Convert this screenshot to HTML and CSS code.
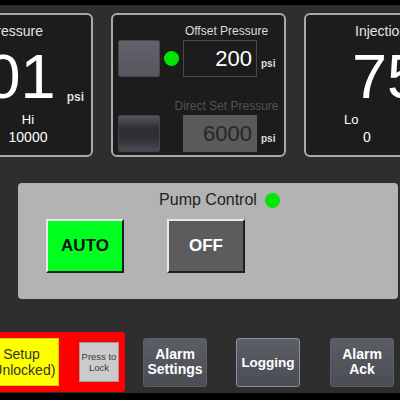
FILE: index.html
```html
<!DOCTYPE html>
<html>
<head>
  <meta charset="utf-8" />
  <title>pump panel</title>
  <meta name="viewport" content="width=device-width, initial-scale=1">
  <link rel="stylesheet" href="styles.css">
</head>
<body>
  <div class="screen">
    <div class="topbar"></div>

    <div class="gauges">
      <section class="gauge gauge-left">
        <div class="gauge-title">Tubing Pressure</div>
        <div class="gauge-value"><span class="reading">3501</span><span class="unit">psi</span></div>
        <div class="limits">
          <div class="limit"><div class="limit-name">Lo</div><div class="limit-num">0</div></div>
          <div class="limit"><div class="limit-name">Hi</div><div class="limit-num">10000</div></div>
        </div>
      </section>

      <section class="setpoints">
        <div class="sp-label">Offset Pressure</div>
        <div class="sp-btn"></div>
        <div class="sp-dot"></div>
        <div class="sp-field">200</div>
        <div class="sp-unit">psi</div>
        <div class="sp-label dim">Direct Set Pressure</div>
        <div class="sp-btn dark"></div>
        <div class="sp-field locked">6000</div>
        <div class="sp-unit">psi</div>
      </section>

      <section class="gauge gauge-right">
        <div class="gauge-title">Injection Pressure</div>
        <div class="gauge-value"><span class="reading">750</span><span class="unit">psi</span></div>
        <div class="limits">
          <div class="limit"><div class="limit-name">Lo</div><div class="limit-num">0</div></div>
          <div class="limit"><div class="limit-name">Hi</div><div class="limit-num">10000</div></div>
        </div>
      </section>
    </div>

    <div class="pump">
      <div class="pump-title">Pump Control <span class="pump-dot"></span></div>
      <div class="pump-buttons">
        <div class="mode-btn on">AUTO</div>
        <div class="mode-btn off">OFF</div>
      </div>
    </div>

    <div class="actions">
      <div class="lock-box">
        <div class="setup">Setup<br>(Unlocked)</div>
        <div class="lock-btn">Press to<br>Lock</div>
      </div>
      <div class="nav">
        <div class="nav-btn">Alarm<br>Settings</div>
        <div class="nav-btn active">Logging</div>
        <div class="nav-btn">Alarm<br>Ack</div>
      </div>
    </div>

    <div class="bottombar"></div>
  </div>
</body>
</html>
```

FILE: styles.css
```css
html, body {
  margin: 0px;
  padding: 0px;
}
body {
  width: 400px;
  height: 400px;
  overflow: hidden;
  background: #2e2e2e;
  font-family: "Liberation Sans", Arial, sans-serif;
}
.screen {
  display: flex;
  flex-direction: column;
  height: 400px;
}
.topbar {
  flex: none;
  height: 5px;
  background: #000;
}
.bottombar {
  flex: none;
  height: 7px;
  margin-top: 1px;
  background: #000;
}

/* gauge row */
.gauges {
  flex: none;
  display: flex;
  gap: 18px;
  height: 144px;
  margin: 8px 0 0 -82px;
}
.gauge, .setpoints {
  flex: none;
  width: 175px;
  height: 144px;
  box-sizing: border-box;
  border: 2px solid #a9a9a9;
  border-radius: 6px;
  background: #1c1c1c;
}
.gauge {
  padding-top: 8px;
  color: #fff;
}
.gauge-title {
  font-size: 14px;
  line-height: 17px;
  color: #e4e4e4;
}
.gauge-value {
  display: flex;
  height: 72px;
}
.reading {
  font-size: 63px;
  line-height: 72px;
}
.unit {
  align-self: flex-end;
  margin: 0 0 8px 11px;
  font-size: 12px;
  font-weight: bold;
  line-height: 14px;
  color: #ddd;
}
.limits {
  display: flex;
}
.limit-name {
  font-size: 13px;
  line-height: 16px;
}
.limit-num {
  font-size: 14px;
  line-height: 19px;
}

.gauge-left .gauge-title {
  text-align: right;
  padding-right: 48px;
}
.gauge-left .gauge-value {
  justify-content: flex-end;
  padding-right: 7px;
}
.gauge-left .limits {
  justify-content: flex-end;
  padding-right: 33px;
}
.gauge-left .limit {
  width: 60px;
  text-align: center;
}

.gauge-right .gauge-title {
  padding-left: 49px;
}
.gauge-right .gauge-value {
  padding-left: 46px;
}
.gauge-right .limits {
  gap: 40px;
  padding-left: 38px;
}
.gauge-right .limit-num {
  padding-left: 19px;
}

/* offset / direct set panel */
.setpoints {
  display: grid;
  grid-template-columns: 42px 23px 74px 13px;
  grid-template-rows: 17px 37px 38px 37px;
  align-items: center;
  padding: 8px 0 0 5px;
}
.sp-label {
  grid-column: 3 / 5;
  align-self: end;
  justify-self: center;
  white-space: nowrap;
  font-size: 12px;
  line-height: 17px;
  color: #dcdcdc;
}
.sp-label.dim {
  color: #525252;
}
.sp-btn {
  grid-column: 1;
  height: 37px;
  box-sizing: border-box;
  border: 1px solid #45464c;
  border-radius: 2px;
  background: linear-gradient(#62636b, #55565e);
}
.sp-btn.dark {
  background: linear-gradient(#55565c, #2e2e33 35%, #2e2e33 65%, #4b4c52);
}
.sp-dot {
  grid-column: 2;
  justify-self: center;
  width: 15px;
  height: 15px;
  border-radius: 50%;
  background: #00e600;
}
.sp-field {
  grid-column: 3;
  height: 37px;
  box-sizing: border-box;
  border: 1px solid #4a4a4a;
  padding-right: 4px;
  text-align: right;
  font-size: 22px;
  line-height: 35px;
  color: #fff;
}
.sp-field.locked {
  border-color: #5a5a5a;
  background: #5a5a5a;
  color: #262626;
}
.sp-unit {
  grid-column: 4;
  margin-top: 10px;
  padding-left: 4px;
  font-size: 10px;
  font-weight: bold;
  color: #ddd;
}

/* pump control */
.pump {
  flex: none;
  width: 380px;
  height: 116px;
  box-sizing: border-box;
  margin: 26px 0 0 18px;
  padding-top: 7px;
  border-radius: 4px;
  background: #b3b3b3;
}
.pump-title {
  display: flex;
  justify-content: center;
  align-items: center;
  font-size: 16px;
  line-height: 20px;
  color: #222;
}
.pump-dot {
  width: 15px;
  height: 15px;
  border-radius: 50%;
  margin: 0 -23px 0 8px;
  background: #00e600;
}
.pump-buttons {
  display: flex;
  gap: 43px;
  margin: 9px 0 0 28px;
}
.mode-btn {
  display: flex;
  align-items: center;
  justify-content: center;
  width: 78px;
  height: 54px;
  box-sizing: border-box;
  border-top: 2px solid #e8e8e8;
  border-left: 2px solid #e8e8e8;
  border-right: 2px solid #1e1e1e;
  border-bottom: 2px solid #1e1e1e;
  font-size: 17px;
  font-weight: bold;
}
.mode-btn.on {
  background: #00ff1e;
  color: #111;
}
.mode-btn.off {
  background: #5c5c5c;
  color: #fff;
}

/* bottom action row */
.actions {
  flex: none;
  display: flex;
  align-items: center;
  height: 60px;
  margin: 33px 0 0 -22px;
}
.lock-box {
  display: flex;
  align-items: center;
  gap: 20px;
  height: 60px;
  box-sizing: border-box;
  padding: 0 6px;
  border-radius: 3px;
  background: #f00;
}
.setup {
  display: flex;
  align-items: center;
  justify-content: center;
  width: 75px;
  height: 48px;
  box-sizing: border-box;
  border: 1px solid #d6d600;
  background: #ffff00;
  color: #333;
  text-align: center;
  font-size: 14px;
  line-height: 16px;
}
.lock-btn {
  display: flex;
  align-items: center;
  justify-content: center;
  width: 40px;
  height: 40px;
  box-sizing: border-box;
  border: 1px solid #9a9a9a;
  background: #cbcbcb;
  color: #3a3a3a;
  text-align: center;
  font-size: 9.5px;
  line-height: 11px;
}
.nav {
  display: flex;
  gap: 29px;
  margin-left: 18px;
}
.nav-btn {
  display: flex;
  align-items: center;
  justify-content: center;
  width: 64px;
  height: 49px;
  box-sizing: border-box;
  border: 1px solid #5e6068;
  border-radius: 3px;
  background: linear-gradient(#5c5e66, #4b4d55);
  color: #fff;
  text-align: center;
  font-size: 14px;
  font-weight: bold;
  line-height: 15px;
}
.nav-btn.active {
  border-color: #8a92a4;
  font-size: 13.5px;
}
.nav-btn:last-child {
  margin-left: 1px;
}
```
